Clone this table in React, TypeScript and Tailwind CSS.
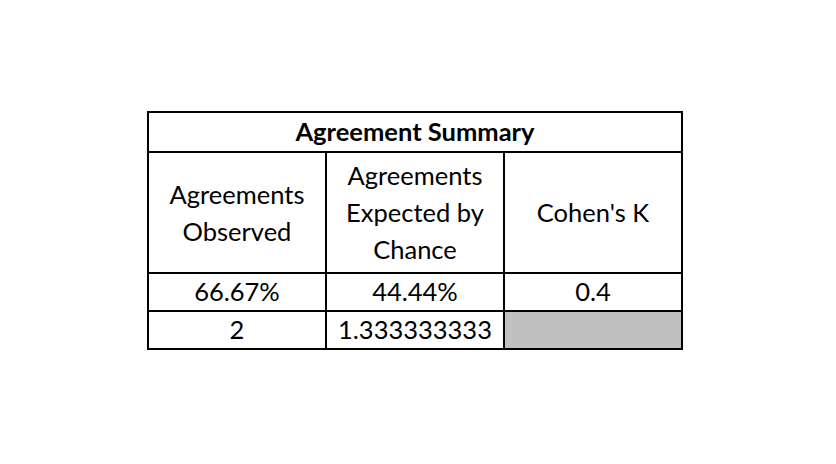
export default function App() {
  return (
    <div className="w-[836px] h-[464px] bg-white pt-[111px] pl-[147px] font-['Lato','Liberation_Sans',sans-serif] text-black text-[25.5px]">
      <div className="grid w-[536px] grid-cols-[176px_176px_176px] grid-rows-[38px_119px_36px_36px] gap-[2px] bg-black p-[2px]">
        <div className="col-span-3 flex items-center justify-center bg-white font-bold leading-none">
          Agreement Summary
        </div>
        <div className="flex items-center justify-center bg-white text-center leading-[37px]">
          Agreements
          <br />
          Observed
        </div>
        <div className="flex items-center justify-center bg-white text-center leading-[37px]">
          Agreements
          <br />
          Expected by
          <br />
          Chance
        </div>
        <div className="flex items-center justify-center bg-white leading-none">Cohen's K</div>
        <div className="flex items-center justify-center bg-white leading-none">66.67%</div>
        <div className="flex items-center justify-center bg-white leading-none">44.44%</div>
        <div className="flex items-center justify-center bg-white leading-none">0.4</div>
        <div className="flex items-center justify-center bg-white leading-none">2</div>
        <div className="flex items-center justify-center bg-white leading-none">1.333333333</div>
        <div className="bg-[#c0c0c0]" />
      </div>
    </div>
  )
}
